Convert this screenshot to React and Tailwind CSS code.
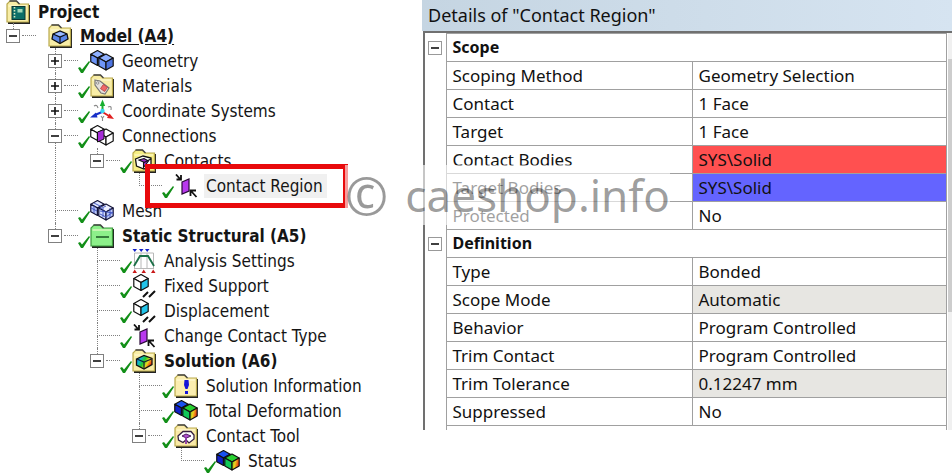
import React from "react";

function Cube({ cx, cy, r, top, left, right, stroke = "#111" }) {
  const w = r * 0.9;
  const h = r / 2;
  return (
    <g stroke={stroke} strokeWidth="1.2" strokeLinejoin="round">
      <polygon points={`${cx},${cy - r} ${cx + w},${cy - h} ${cx},${cy} ${cx - w},${cy - h}`} fill={top} />
      <polygon points={`${cx - w},${cy - h} ${cx},${cy} ${cx},${cy + r} ${cx - w},${cy + h}`} fill={left} />
      <polygon points={`${cx + w},${cy - h} ${cx},${cy} ${cx},${cy + r} ${cx + w},${cy + h}`} fill={right} />
    </g>
  );
}

function Folder({ fill = "#f8eda6", edge = "#b9a94c" }) {
  return (
    <g>
      <path d="M2 23H23.5V5" fill="none" stroke="#222" strokeWidth="1.8" />
      <path d="M1 22V4L4 1H10L13 4H22.5V22Z" fill={fill} stroke={edge} strokeWidth="1.2" />
      <path d="M3.5 1H10.5L13.5 4" fill="none" stroke="#444" strokeWidth="1.3" />
      <path d="M2.5 6H21" stroke="#fffbd8" strokeWidth="1" />
    </g>
  );
}

const rainbow = (
  <defs>
    <linearGradient id="rainbow" x1="0" x2="1" y1="0" y2="0.5">
      <stop offset="0" stopColor="#1238e8" />
      <stop offset="0.3" stopColor="#12b8d0" />
      <stop offset="0.55" stopColor="#20cc28" />
      <stop offset="0.78" stopColor="#e8d820" />
      <stop offset="1" stopColor="#ee3010" />
    </linearGradient>
    <linearGradient id="warm" x1="0" x2="1" y1="0" y2="0.3">
      <stop offset="0" stopColor="#48c820" />
      <stop offset="0.5" stopColor="#f0d020" />
      <stop offset="1" stopColor="#e83010" />
    </linearGradient>
  </defs>
);

const ICONS = {
  project: (
    <>
      <Folder />
      <rect x="6" y="6.5" width="13" height="13" fill="#0c6f68" stroke="#0b3835" />
      <path d="M8.5 7V19" stroke="#d8e8c0" strokeWidth="1.6" strokeDasharray="1.5 1.5" />
      <rect x="11.5" y="9" width="5" height="3.5" fill="#9fd8b8" />
    </>
  ),
  model: (
    <>
      <Folder />
      <path d="M5 10L12 7L19 10L20 15L12 19.5L4 15Z" fill="#5b86e8" stroke="#111" strokeWidth="1.3" />
      <path d="M5 10L12 13L19 10M12 13V19" fill="none" stroke="#111" strokeWidth="1.2" />
      <path d="M7 10L12 8L17 10L12 12Z" fill="#9dbcff" />
    </>
  ),
  geometry: (
    <>
      <Cube cx={7.5} cy={9} r={7.5} top="#8fb0ff" left="#6a92f5" right="#6a92f5" />
      <Cube cx={16} cy={13} r={8} top="#8fb0ff" left="#6f96f8" right="#4d74e0" />
    </>
  ),
  materials: (
    <>
      <Folder />
      <path d="M5 6L10 7L19 14L15 20L11 19L5 11Z" fill="#e4e0dc" stroke="#777" strokeWidth="1.2" />
      <rect x="11.5" y="11.5" width="5" height="5" transform="rotate(35 14 14)" fill="#f06868" stroke="#b44" strokeWidth="0.8" />
      <circle cx="7.7" cy="9" r="1.2" fill="#fff" stroke="#777" strokeWidth="0.8" />
    </>
  ),
  coords: (
    <>
      <path d="M12.5 12V4" stroke="#18b030" strokeWidth="2" />
      <path d="M9.8 7L12.5 0.5L15.2 7Z" fill="#18b030" />
      <path d="M12.5 13L19 17" stroke="#e02020" strokeWidth="2" />
      <path d="M17 19L24 20L19.5 14.5Z" fill="#e02020" />
      <path d="M12 13L5 16" stroke="#1830c8" strokeWidth="2" />
      <path d="M6 13.5L0 18.5L7.5 18.5Z" fill="#1830c8" />
      <circle cx="12.5" cy="12" r="2.2" fill="#38d8f0" />
      <path d="M4 7Q7 5 8 9M18 8Q22 6 21 11M11 17L12.5 19L14 17M12.5 19V22" fill="none" stroke="#888" strokeWidth="1.1" />
    </>
  ),
  connections: (
    <>
      <Cube cx={7.5} cy={9} r={7.5} top="#fff" left="#fff" right="#b43ae0" />
      <Cube cx={16} cy={13} r={8} top="#fff" left="#fff" right="#fff" />
      <path d="M7.5 8L14 5.500V15L7.5 18Z" fill="#a42cd6" stroke="#111" strokeWidth="1" />
    </>
  ),
  contacts: (
    <>
      <Folder fill="#f6ee84" />
      <path d="M3.5 10L11 7L19 9V16L12 20L4.5 17Z" fill="#fff" stroke="#111" strokeWidth="1.3" />
      <path d="M7 11L12 9.5L16.5 12L11.5 18.5V13Z" fill="#9a30c8" stroke="#111" strokeWidth="1.1" />
      <path d="M12 13.5L19 10" stroke="#111" strokeWidth="1.1" />
    </>
  ),
  region: (
    <>
      <path d="M8 8L15 5V17L8 20Z" fill="#b838ee" stroke="#2a0a38" strokeWidth="1.2" />
      <path d="M2 0.5L6.5 5.5M2.5 5.5H7V1" fill="none" stroke="#111" strokeWidth="1.8" />
      <path d="M22.5 23L17.5 17.5M16.5 22V16.5H22" fill="none" stroke="#111" strokeWidth="1.8" />
    </>
  ),
  mesh: (
    <>
      <Cube cx={7.5} cy={9} r={7.5} top="#dfe6ff" left="#b9c6f8" right="#b9c6f8" stroke="#15153a" />
      <Cube cx={16} cy={13} r={8} top="#eef1ff" left="#d3dcff" right="#b9c6f8" stroke="#15153a" />
      <path d="M1 9L7 12M4 4L12 8M10 12L23 14M13 9V18M20 9V18M10 15L16 18L23 13M4 7V14M10 10L16 7" fill="none" stroke="#3b4fc0" strokeWidth="0.9" />
    </>
  ),
  structural: (
    <>
      <Folder fill="#8df08a" edge="#3d9a3d" />
      <path d="M6 13H19" stroke="#14491a" strokeWidth="1.4" />
    </>
  ),
  settings: (
    <>
      <path d="M2.5 4V20M9 4V20M15 4V20M21.5 4V20M2.5 4H21.5M2.5 19.5H21.5" stroke="#b8b8b8" strokeWidth="1" />
      <path d="M2 17L8 7H16L22 17" fill="none" stroke="#1c7048" strokeWidth="1.9" />
      <path d="M0.5 0H5L2.8 3ZM7 0H11.5L9.2 3ZM13 0H17.5L15.2 3Z" fill="#1020c8" />
      <path d="M0.5 24L2.7 20.5L5 24ZM9.5 24L11.7 20.5L14 24ZM19 24L21.2 20.5L23.5 24Z" fill="#c81818" />
    </>
  ),
  support: (
    <>
      <Cube cx={9} cy={8.5} r={8} top="#fff" left="#fff" right="#22c4ea" />
      <path d="M11 23L16 18M17 23L23 17" stroke="#111" strokeWidth="2" />
    </>
  ),
  solution: (
    <>
      {rainbow}
      <Folder />
      <path d="M4.5 10L12 6.5L20 9.5V15.5L12 20L4.5 16Z" fill="url(#rainbow)" stroke="#111" strokeWidth="1.3" />
      <path d="M5 10L12 13L19.5 10M12 13V19" fill="none" stroke="#123" strokeWidth="1.2" />
    </>
  ),
  info: (
    <>
      <Folder fill="#fbeeb0" />
      <path d="M10.5 6H14.5L15 11L13.5 15H11.5L10 11Z" fill="#1414d8" />
      <rect x="11" y="17" width="3" height="3" fill="#1414d8" />
    </>
  ),
  result: (
    <>
      <Cube cx={7.5} cy={9} r={7.5} top="#1a50f0" left="#1020c8" right="#0fa8d8" />
      <Cube cx={16} cy={13} r={8} top="#28d030" left="#10c858" right="url(#warm)" />
    </>
  ),
  tool: (
    <>
      <Folder fill="#faeaa8" />
      <path d="M4 12L9 7.5H17L20 11V15L15 19L12 16L9 18.5L4.5 16Z" fill="#fff" stroke="#35203f" strokeWidth="1.3" />
      <path d="M8 12L12 10L17 12L12.5 14Z" fill="#b050d0" stroke="#502060" strokeWidth="1" />
      <path d="M12 13V20" stroke="#8a38a8" strokeWidth="1.8" />
    </>
  ),
};

const TREE = {
  label: "Project",
  icon: "project",
  bold: true,
  children: [
    {
      label: "Model (A4)",
      icon: "model",
      bold: true,
      underline: true,
      open: true,
      children: [
        { label: "Geometry", icon: "geometry", check: true, open: false },
        { label: "Materials", icon: "materials", check: true, open: false },
        { label: "Coordinate Systems", icon: "coords", check: true, open: false },
        {
          label: "Connections",
          icon: "connections",
          check: true,
          open: true,
          children: [
            {
              label: "Contacts",
              icon: "contacts",
              check: true,
              open: true,
              children: [{ label: "Contact Region", icon: "region", check: true, selected: true }],
            },
          ],
        },
        { label: "Mesh", icon: "mesh", check: true },
        {
          label: "Static Structural (A5)",
          icon: "structural",
          bold: true,
          check: true,
          open: true,
          children: [
            { label: "Analysis Settings", icon: "settings", check: true },
            { label: "Fixed Support", icon: "support", check: true },
            { label: "Displacement", icon: "support", check: true },
            { label: "Change Contact Type", icon: "region", check: true },
            {
              label: "Solution (A6)",
              icon: "solution",
              bold: true,
              check: true,
              open: true,
              children: [
                { label: "Solution Information", icon: "info", check: true },
                { label: "Total Deformation", icon: "result", check: true },
                {
                  label: "Contact Tool",
                  icon: "tool",
                  check: true,
                  open: true,
                  children: [{ label: "Status", icon: "result", check: true }],
                },
              ],
            },
          ],
        },
      ],
    },
  ],
};

function Expander({ open, label, className }) {
  return (
    <button
      type="button"
      aria-label={`${open ? "Collapse" : "Expand"} ${label}`}
      className={`flex size-3.5 shrink-0 items-center justify-center border bg-white ${className}`}
    >
      <svg viewBox="0 0 8 8" className="size-2" stroke="#111" strokeWidth="1.6">
        <path d={open ? "M0 4H8" : "M0 4H8M4 0V8"} />
      </svg>
    </button>
  );
}

function Branch({ node, last }) {
  const line = "border-dotted border-[#808080]";
  return (
    <span className="flex w-[42px] shrink-0">
      {node.open === undefined ? (
        <span className="ml-[7px] flex flex-1 flex-col">
          <span className={`flex-1 border-b border-l ${line}`} />
          <span className={`flex-1 ${last ? "" : "border-l"} ${line}`} />
        </span>
      ) : (
        <>
          <span className="flex w-3.5 flex-col items-center">
            <span className={`w-px flex-1 border-l ${line}`} />
            <Expander open={node.open} label={node.label} className="border-[#808080]" />
            <span className={`w-px flex-1 ${last ? "" : "border-l"} ${line}`} />
          </span>
          <span className={`ml-0.5 h-1/2 flex-1 border-b ${line}`} />
        </>
      )}
      <span className="flex w-3 items-end">
        {node.check && (
          <svg viewBox="0 0 12 12" className="size-3">
            <path d="M0 7L2 6L4 8.5L11 0L12 1L5 12H3Z" fill="#128f18" />
          </svg>
        )}
      </span>
    </span>
  );
}

function TreeNode({ node, guides = [], root = false, last = true }) {
  const childGuides = root ? [] : [...guides, !last];
  return (
    <li role="treeitem" aria-selected={!!node.selected}>
      <div className={`relative flex ${root ? "h-[23px]" : "h-[25px]"}`}>
        {guides.map((on, i) => (
          <span key={i} className="flex w-[42px] shrink-0 pl-[7px]">
            {on && <span className="border-l border-dotted border-[#808080]" />}
          </span>
        ))}
        {!root && <Branch node={node} last={last} />}
        <svg viewBox="0 0 24 24" className="size-6 shrink-0 self-center">
          {ICONS[node.icon]}
        </svg>
        <span
          className={`ml-1.5 self-center whitespace-nowrap px-0.5 leading-6 ${node.bold ? "font-bold" : ""} ${
            node.underline ? "underline underline-offset-2" : ""
          } ${node.selected ? "bg-[#f0f0f0] pr-1" : ""}`}
        >
          {node.label}
        </span>
        {node.selected && (
          <span className="pointer-events-none absolute -top-[9px] -bottom-[10px] left-[139px] z-10 w-[203px] border-5 border-[#e80a0c]" />
        )}
      </div>
      {node.children && (
        <ul role="group">
          {node.children.map((child, i) => (
            <TreeNode key={child.label} node={child} guides={childGuides} last={i === node.children.length - 1} />
          ))}
        </ul>
      )}
    </li>
  );
}

const SECTIONS = [
  {
    title: "Scope",
    rows: [
      ["Scoping Method", "Geometry Selection"],
      ["Contact", "1 Face"],
      ["Target", "1 Face"],
      ["Contact Bodies", "SYS\\Solid", "bg-[#ff5050]"],
      ["Target Bodies", "SYS\\Solid", "bg-[#6464ff]"],
      ["Protected", "No"],
    ],
  },
  {
    title: "Definition",
    rows: [
      ["Type", "Bonded"],
      ["Scope Mode", "Automatic", "bg-[#e7e6e2]"],
      ["Behavior", "Program Controlled"],
      ["Trim Contact", "Program Controlled"],
      ["Trim Tolerance", "0.12247 mm", "bg-[#e7e6e2]"],
      ["Suppressed", "No"],
    ],
  },
];

function Details() {
  return (
    <section className="min-w-0 flex-1 font-['Noto_Sans','Open_Sans',sans-serif] text-[#111]">
      <h2 className="h-[31px] truncate bg-linear-to-r from-[#c5d5e2] to-[#d6e4f1] pl-1.5 text-[18px] leading-[31px]">
        Details of "Contact Region"
      </h2>
      <div className="ml-px flex h-[399px] overflow-hidden border-t-2 border-l-2 border-[#707070]">
        <table className="h-fit flex-1 table-fixed border-collapse text-[17px] leading-[27px]">
          <colgroup>
            <col className="w-[21px]" />
            <col className="w-[246px]" />
            <col />
          </colgroup>
          {SECTIONS.map((section) => (
            <tbody key={section.title}>
              <tr className="h-7">
                <td className="p-0 pl-[3px]">
                  <Expander open label={section.title} className="border-[#999999]" />
                </td>
                <th colSpan={2} scope="rowgroup" className="border border-[#a0a0a0] px-1.5 py-0 text-left text-[16px] font-bold">
                  {section.title}
                </th>
              </tr>
              {section.rows.map(([name, value, tint = ""]) => (
                <tr key={name} className="h-7">
                  <td className="p-0" />
                  <th scope="row" className="border border-[#a0a0a0] px-1.5 py-0 text-left font-normal">
                    {name}
                  </th>
                  <td className={`border border-[#a0a0a0] px-1.5 py-0 ${tint}`}>{value}</td>
                </tr>
              ))}
            </tbody>
          ))}
          <tbody>
            <tr className="h-7">
              <td className="p-0" />
              <td colSpan={2} className="border border-[#a0a0a0] p-0" />
            </tr>
          </tbody>
        </table>
        <div className="ml-px w-1 shrink-0 bg-[#f0f0f0] pt-[26px]">
          <div className="h-[253px] bg-[#cdcdcd]" />
        </div>
      </div>
    </section>
  );
}

export default function App() {
  return (
    <main className="relative flex min-h-screen items-start overflow-hidden bg-white">
      <nav
        aria-label="Outline"
        className="w-[422px] shrink-0 pl-1.5 font-['DejaVu_Sans_Condensed','Noto_Sans',sans-serif] text-[17px] text-[#151515]"
      >
        <ul role="tree">
          <TreeNode node={TREE} root />
        </ul>
      </nav>
      <Details />
      <div className="pointer-events-none absolute top-[165px] left-[345px] z-20 flex h-[60px] w-[325px] items-center justify-between bg-white/60 font-['Noto_Sans','Open_Sans',sans-serif] text-[44px] leading-[60px] whitespace-nowrap text-black/40">
        <span className="text-[52px]">©</span>
        <span>caeshop.info</span>
      </div>
    </main>
  );
}
